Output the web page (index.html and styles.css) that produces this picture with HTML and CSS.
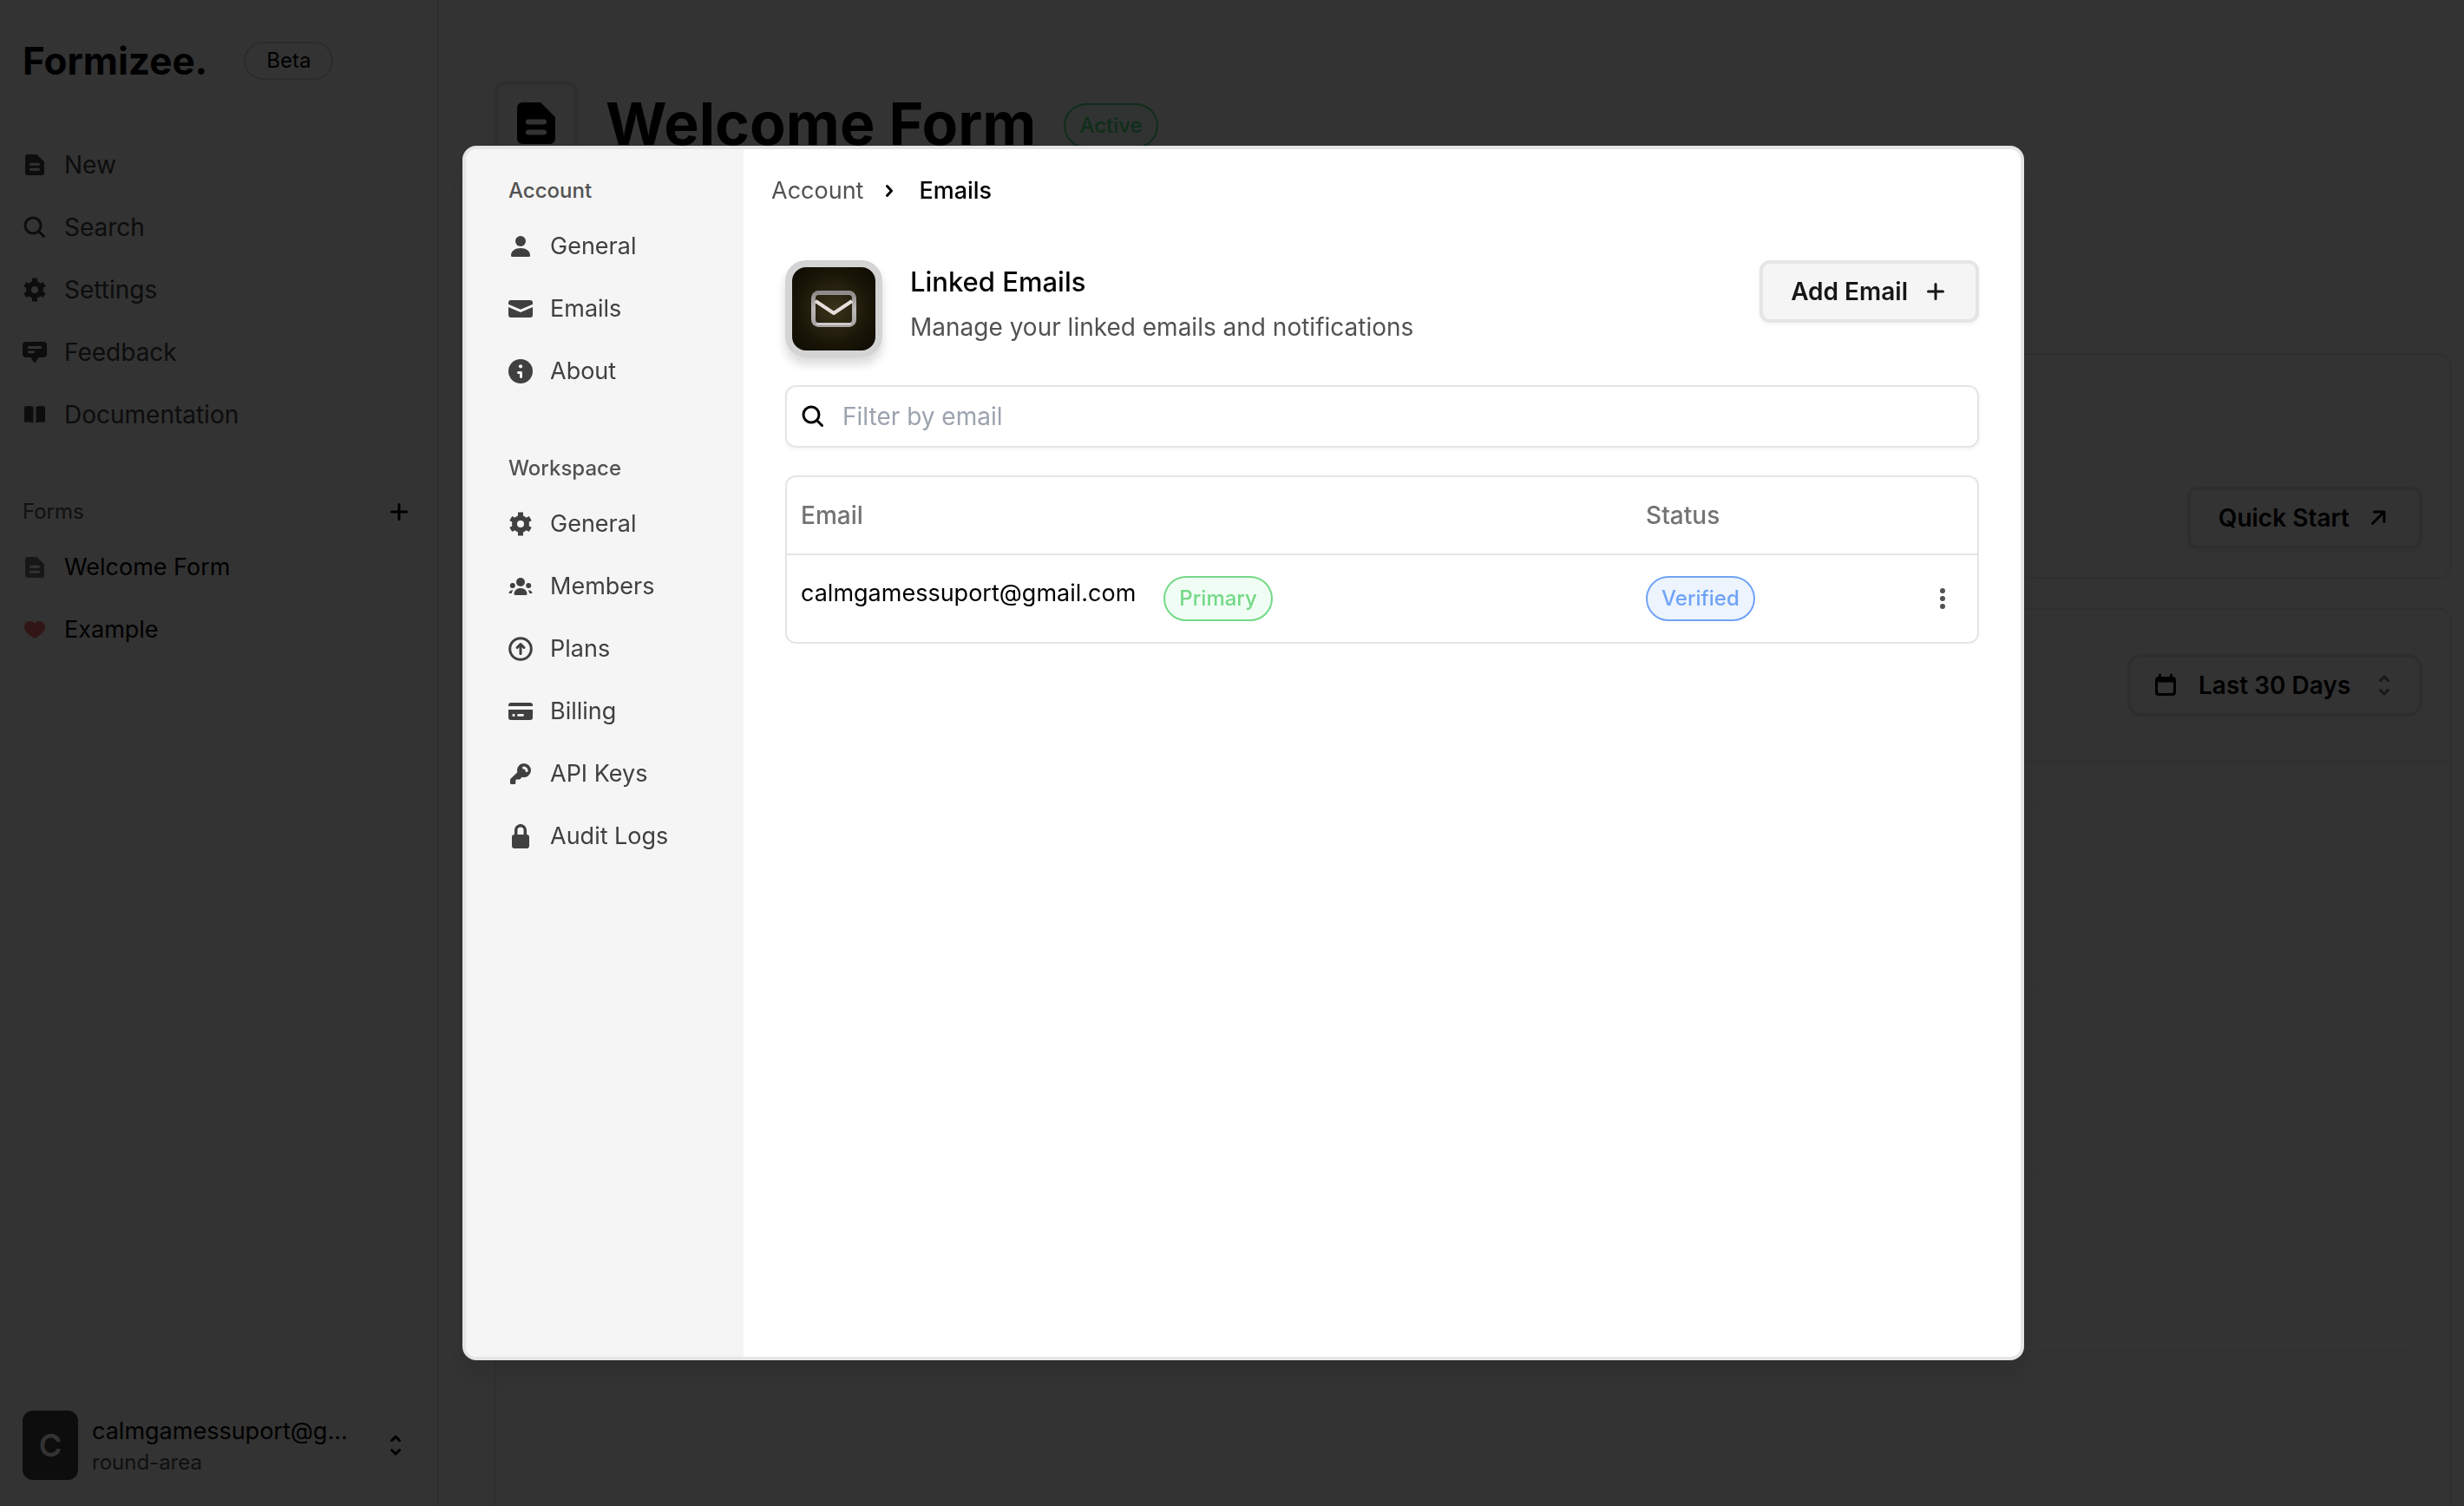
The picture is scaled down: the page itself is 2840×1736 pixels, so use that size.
FILE: index.html
```html
<!DOCTYPE html>
<html lang="en">
<head>
    <meta charset="UTF-8">
    <meta name="viewport" content="width=device-width, initial-scale=1.0">
    <title>Formizee</title>
    <link rel="stylesheet" href="styles.css">
</head>
<body>
    <svg class="sprite" aria-hidden="true">
        <symbol id="doc" viewBox="0 0 28 28">
            <path fill="currentColor" fill-rule="evenodd" d="M6 2h10.500l8.500 8.500V23a3 3 0 0 1-3 3H6a3 3 0 0 1-3-3V5a3 3 0 0 1 3-3zM9.500 11.800h9a1.500 1.500 0 0 1 0 3h-9a1.500 1.500 0 0 1 0-3zM9.500 17.800h9a1.500 1.500 0 0 1 0 3h-9a1.500 1.500 0 0 1 0-3z"/>
        </symbol>
        <symbol id="search" viewBox="0 0 28 28">
            <path class="line" d="M12 3a9 9 0 1 0 0 18a9 9 0 1 0 0-18zM18.500 18.500l6 6"/>
        </symbol>
        <symbol id="gear" viewBox="0 0 28 28">
            <circle cx="14" cy="14" r="7" fill="none" stroke="currentColor" stroke-width="6"/>
            <path fill="none" stroke="currentColor" stroke-width="6" d="M14 6V0.500M14 22v5.500M20.900 10l4.300-2.500M7.100 18l-4.300 2.500M20.900 18l4.300 2.500M7.100 10l-4.300-2.500"/>
        </symbol>
        <symbol id="chat" viewBox="0 0 28 28">
            <path fill="currentColor" fill-rule="evenodd" d="M4 2h20a4 4 0 0 1 4 4v10a4 4 0 0 1-4 4h-5.500l-3.500 5.500a1.200 1.200 0 0 1-2 0L9.500 20H4a4 4 0 0 1-4-4V6a4 4 0 0 1 4-4zM7.500 7h13a1.500 1.500 0 0 1 0 3h-13a1.500 1.500 0 0 1 0-3zM7.500 12.200h5a1.500 1.500 0 0 1 0 3h-5a1.500 1.500 0 0 1 0-3z"/>
        </symbol>
        <symbol id="book" viewBox="0 0 28 28">
            <path fill="currentColor" d="M2 6q0-1.500 1.500-1.700 5-.8 9 .7v18.700q-4-1.600-9-.9Q2 23 2 21.500zM26 6q0-1.500-1.500-1.700-5-.8-9 .7v18.700q4-1.600 9-.9 1.500.2 1.500-1.300z"/>
        </symbol>
        <symbol id="heart" viewBox="0 0 28 28">
            <path fill="currentColor" d="M14 24C8 20.500 2 16.500 2 10.500 2 6.500 5 4 8 4c2.600 0 4.500.8 6 2.600C15.500 4.800 17.400 4 20 4c3 0 6 2.500 6 6.500 0 6-6 10-12 13.500z"/>
        </symbol>
        <symbol id="user" viewBox="0 0 28 28">
            <circle cx="14" cy="8" r="6" fill="currentColor"/>
            <path fill="currentColor" d="M3 24.500C3 19 8 16 14 16s11 3 11 8.500q0 1.500-1.500 1.500h-19Q3 26 3 24.500z"/>
        </symbol>
        <symbol id="mail" viewBox="0 0 28 28">
            <path fill="currentColor" d="M0 7a3 3 0 0 1 3-3h22a3 3 0 0 1 3 3v1.700l-14 6-14-6zM0 12l14 6 14-6v9a3 3 0 0 1-3 3H3a3 3 0 0 1-3-3z"/>
        </symbol>
        <symbol id="info" viewBox="0 0 28 28">
            <circle cx="14" cy="14" r="14" fill="currentColor"/>
            <circle class="cut-fill" cx="14" cy="8.3" r="2.1"/>
            <path class="cut-line" d="M11.500 15.500h3v5"/>
        </symbol>
        <symbol id="users" viewBox="0 0 28 28">
            <g fill="currentColor">
                <circle cx="14" cy="9" r="5"/>
                <circle cx="4.800" cy="13" r="3"/>
                <circle cx="23.200" cy="13" r="3"/>
                <path d="M6.500 22.500c.5-4.500 3.500-6.500 7.500-6.500s7 2 7.500 6.500q0 1.500-1.500 1.500H8q-1.500 0-1.500-1.500zM5.500 18.200C3 18 1 19.500.5 21.200q0 .8.800.8h2.400q.3-2.200 1.800-3.800zM22.500 18.200c2.500-.2 4.500 1.300 5 3q0 .8-.8.8h-2.400q-.3-2.200-1.800-3.800z"/>
            </g>
        </symbol>
        <symbol id="upgrade" viewBox="0 0 28 28">
            <circle class="line" cx="14" cy="14" r="12.300"/>
            <path class="line" d="M14 19.500V9M10 12.500l4-4 4 4"/>
        </symbol>
        <symbol id="card" viewBox="0 0 28 28">
            <path fill="currentColor" fill-rule="evenodd" d="M0 8V7a3 3 0 0 1 3-3h22a3 3 0 0 1 3 3v1zM0 12h28v9a3 3 0 0 1-3 3H3a3 3 0 0 1-3-3zM6 16.800a1.600 1.600 0 1 0 0 3.200a1.600 1.600 0 1 0 0-3.200zM11.500 17h5a1.400 1.400 0 0 1 0 2.800h-5a1.400 1.400 0 0 1 0-2.800z"/>
        </symbol>
        <symbol id="key" viewBox="0 0 28 28">
            <path fill="currentColor" d="M18 2a8 8 0 1 1-2.200 15.700L13.500 20q-.6.600-1.500.6H9.500q-1.200 0-1.200 1.200v2.700q0 1.500-1.500 1.500H3.500Q2 26 2 24.500v-3.200q0-1 .7-1.700l7.600-7.400A8 8 0 0 1 18 2z"/>
            <path class="cut-line" d="M17.500 7a3.600 3.600 0 0 1 3.600 3.600"/>
        </symbol>
        <symbol id="lock" viewBox="0 0 28 28">
            <rect x="4" y="12" width="20" height="16" rx="3" fill="currentColor"/>
            <path fill="none" stroke="currentColor" stroke-width="3.500" d="M8.700 13V7a5.300 5.300 0 0 1 10.600 0v6"/>
        </symbol>
        <symbol id="plus" viewBox="0 0 28 28">
            <path class="line" d="M14 5.500v17M5.500 14h17"/>
        </symbol>
        <symbol id="updown" viewBox="0 0 28 28">
            <path class="line" d="M9.500 8.500L14 4l4.500 4.500M9.500 19.500L14 24l4.500-4.500"/>
        </symbol>
        <symbol id="chevron" viewBox="0 0 28 28">
            <path class="line" d="M11.500 8.500l5 5.500-5 5.500"/>
        </symbol>
        <symbol id="arrow" viewBox="0 0 28 28">
            <path class="line" d="M6.500 20.500L19.500 7.500M8.500 7h11.500V18.500"/>
        </symbol>
        <symbol id="calendar" viewBox="0 0 28 28">
            <path fill="currentColor" fill-rule="evenodd" d="M6 4h16a4 4 0 0 1 4 4v14a4 4 0 0 1-4 4H6a4 4 0 0 1-4-4V8a4 4 0 0 1 4-4zM5 10.500V21a2 2 0 0 0 2 2h14a2 2 0 0 0 2-2V10.500z"/>
            <path class="line" d="M7.500 2v4M20.500 2v4"/>
        </symbol>
        <symbol id="dots" viewBox="0 0 28 28">
            <g fill="currentColor">
                <circle cx="14" cy="5" r="3"/>
                <circle cx="14" cy="14" r="3"/>
                <circle cx="14" cy="23" r="3"/>
            </g>
        </symbol>
    </svg>

    <div class="app">
        <aside class="sidebar">
            <div class="brand">
                <span class="logo">Formizee.</span>
                <span class="beta">Beta</span>
            </div>
            <nav class="menu">
                <a href="#"><svg class="icon"><use href="#doc"/></svg>New</a>
                <a href="#"><svg class="icon"><use href="#search"/></svg>Search</a>
                <a href="#"><svg class="icon"><use href="#gear"/></svg>Settings</a>
                <a href="#"><svg class="icon"><use href="#chat"/></svg>Feedback</a>
                <a href="#"><svg class="icon"><use href="#book"/></svg>Documentation</a>
            </nav>
            <div class="menu-label forms-label">
                <span>Forms</span>
                <button type="button" aria-label="New form"><svg class="icon"><use href="#plus"/></svg></button>
            </div>
            <nav class="menu forms">
                <a href="#"><svg class="icon"><use href="#doc"/></svg>Welcome Form</a>
                <a href="#"><svg class="icon heart"><use href="#heart"/></svg>Example</a>
            </nav>
            <button class="account" type="button">
                <span class="avatar">C</span>
                <span class="account-text">
                    <span class="account-email">calmgamessuport@g...</span>
                    <span class="account-team">round-area</span>
                </span>
                <svg class="icon"><use href="#updown"/></svg>
            </button>
        </aside>

        <main class="page">
            <header class="page-header">
                <span class="form-icon"><svg><use href="#doc"/></svg></span>
                <h1>Welcome Form</h1>
                <span class="badge green">Active</span>
            </header>
            <section class="panel start">
                <button class="btn outline" type="button">Quick Start<svg class="icon"><use href="#arrow"/></svg></button>
            </section>
            <section class="panel chart">
                <div class="chart-top">
                    <label class="range">
                        <svg class="icon"><use href="#calendar"/></svg>
                        <select aria-label="Date range">
                            <option>Last 30 Days</option>
                        </select>
                        <svg class="icon muted"><use href="#updown"/></svg>
                    </label>
                </div>
                <div class="chart-grid">
                    <div></div>
                    <div></div>
                    <div></div>
                    <div></div>
                </div>
            </section>
        </main>
    </div>

    <div class="overlay">
        <div class="dialog" role="dialog" aria-modal="true" aria-label="Settings">
            <aside class="dialog-menu">
                <div class="menu-label">Account</div>
                <nav class="menu">
                    <a href="#"><svg class="icon"><use href="#user"/></svg>General</a>
                    <a href="#"><svg class="icon"><use href="#mail"/></svg>Emails</a>
                    <a href="#"><svg class="icon"><use href="#info"/></svg>About</a>
                </nav>
                <div class="menu-label">Workspace</div>
                <nav class="menu">
                    <a href="#"><svg class="icon"><use href="#gear"/></svg>General</a>
                    <a href="#"><svg class="icon"><use href="#users"/></svg>Members</a>
                    <a href="#"><svg class="icon"><use href="#upgrade"/></svg>Plans</a>
                    <a href="#"><svg class="icon"><use href="#card"/></svg>Billing</a>
                    <a href="#"><svg class="icon"><use href="#key"/></svg>API Keys</a>
                    <a href="#"><svg class="icon"><use href="#lock"/></svg>Audit Logs</a>
                </nav>
            </aside>
            <div class="dialog-body">
                <nav class="breadcrumb">
                    <a href="#">Account</a>
                    <svg class="icon"><use href="#chevron"/></svg>
                    <span>Emails</span>
                </nav>
                <div class="content">
                    <div class="title-row">
                        <span class="tile">
                            <svg viewBox="0 0 52 42">
                                <defs>
                                    <linearGradient id="metal" x1="0" y1="0" x2="0" y2="1">
                                        <stop offset="0" stop-color="#8f8a8a"/>
                                        <stop offset="0.5" stop-color="#bdb8b8"/>
                                        <stop offset="1" stop-color="#a9a3a3"/>
                                    </linearGradient>
                                </defs>
                                <rect x="2.500" y="2.500" width="47" height="37" rx="6" fill="none" stroke="url(#metal)" stroke-width="5"/>
                                <path d="M6 38.500h40" stroke="#dcd8d8" stroke-width="2"/>
                                <path d="M5 12l21 14 21-14" fill="none" stroke="#e6e0dc" stroke-width="4" stroke-linejoin="round"/>
                            </svg>
                        </span>
                        <div class="title-text">
                            <h2>Linked Emails</h2>
                            <p>Manage your linked emails and notifications</p>
                        </div>
                        <button class="btn" type="button">Add Email<svg class="icon"><use href="#plus"/></svg></button>
                    </div>
                    <label class="filter">
                        <svg class="icon"><use href="#search"/></svg>
                        <input type="text" placeholder="Filter by email" aria-label="Filter by email">
                    </label>
                    <div class="table-wrap">
                        <table>
                            <thead>
                                <tr>
                                    <th class="col-email">Email</th>
                                    <th>Status</th>
                                    <th class="col-menu"></th>
                                </tr>
                            </thead>
                            <tbody>
                                <tr>
                                    <td>
                                        <div class="email-cell">
                                            <span>calmgamessuport@gmail.com</span>
                                            <span class="badge green">Primary</span>
                                        </div>
                                    </td>
                                    <td><span class="badge blue">Verified</span></td>
                                    <td class="col-menu">
                                        <button type="button" aria-label="Email options"><svg class="icon"><use href="#dots"/></svg></button>
                                    </td>
                                </tr>
                            </tbody>
                        </table>
                    </div>
                </div>
            </div>
        </div>
    </div>
</body>
</html>
```
FILE: styles.css
```css
* {
    margin: 0;
    padding: 0;
    box-sizing: border-box;
}
body {
    height: 100vh;
    overflow: hidden;
    font-family: Inter, sans-serif;
    font-size: 28px;
    line-height: 40px;
    color: #000;
    background: #fcfcfc;
}
a {
    color: inherit;
    text-decoration: none;
}
button, input, select {
    font: inherit;
    color: inherit;
    border: none;
    background: none;
}
.sprite {
    position: absolute;
    width: 0;
    height: 0;
}
.icon {
    display: block;
    width: 28px;
    height: 28px;
    flex-shrink: 0;
}
.line {
    fill: none;
    stroke: currentColor;
    stroke-width: 3;
    stroke-linecap: round;
    stroke-linejoin: round;
}
.cut-fill {
    fill: #f5f5f5;
}
.cut-line {
    fill: none;
    stroke: #f5f5f5;
    stroke-width: 3;
    stroke-linecap: round;
    stroke-linejoin: round;
}

/* sidebar */
.app {
    display: flex;
    height: 100%;
}
.sidebar {
    display: flex;
    flex-direction: column;
    width: 506px;
    flex-shrink: 0;
    padding: 40px 26px 30px;
    border-right: 2px solid #e5e5e5;
}
.brand {
    display: flex;
    align-items: center;
    gap: 42px;
    height: 60px;
    margin-bottom: 54px;
}
.logo {
    font-size: 44px;
    font-weight: 700;
}
.beta {
    padding: 0 24px;
    border: 2px solid #d4d4d4;
    border-radius: 22px;
    font-size: 24px;
}
.menu a {
    display: flex;
    align-items: center;
    gap: 20px;
    height: 72px;
    color: #404040;
}
.menu-label {
    display: flex;
    align-items: center;
    height: 56px;
    font-size: 24px;
    font-weight: 500;
    color: #525252;
}
.menu + .menu-label {
    margin-top: 48px;
}
.forms-label {
    justify-content: space-between;
    font-weight: 400;
    padding-right: 4px;
}
.forms-label button {
    color: #000;
}
.forms a, .dialog-menu a, .breadcrumb, .account-email, .email-cell {
    font-size: 27px;
}
.forms a {
    color: #000;
}
.forms .icon {
    color: #737373;
}
.forms .heart {
    color: #f87171;
}
.account {
    display: flex;
    align-items: center;
    gap: 16px;
    margin-top: auto;
    padding-right: 8px;
    text-align: left;
}
.avatar {
    width: 64px;
    height: 80px;
    border-radius: 12px;
    background: #404040;
    color: #fff;
    font-size: 36px;
    line-height: 80px;
    font-weight: 600;
    text-align: center;
}
.account-text {
    flex: 1;
    display: flex;
    flex-direction: column;
}
.account-team {
    font-size: 24px;
    line-height: 32px;
    color: #525252;
}

/* page behind the dialog */
.page {
    flex: 1;
    padding: 94px 14px 0 64px;
    overflow: hidden;
}
.page-header {
    display: flex;
    align-items: center;
    gap: 32px;
    height: 96px;
    margin-bottom: 217px;
}
.form-icon {
    display: flex;
    align-items: center;
    justify-content: center;
    width: 96px;
    height: 96px;
    border: 4px solid #e5e5e5;
    border-radius: 12px;
}
.form-icon svg {
    width: 56px;
    height: 56px;
}
h1 {
    font-size: 68px;
    line-height: 96px;
}
.panel {
    border: 2px solid #ececec;
    border-radius: 16px;
    background: #fff;
}
.start {
    display: flex;
    justify-content: flex-end;
    align-items: flex-end;
    height: 260px;
    padding: 32px;
    margin-bottom: 34px;
}
.chart {
    height: 1200px;
}
.chart-top {
    display: flex;
    justify-content: flex-end;
    align-items: flex-start;
    height: 176px;
    padding: 51px 32px;
    border-bottom: 2px solid #ececec;
}
.range {
    display: flex;
    align-items: center;
    gap: 24px;
    height: 72px;
    padding: 0 26px;
    border: 4px solid #e5e5e5;
    border-radius: 16px;
    font-weight: 600;
}
.range select {
    appearance: none;
}
.muted {
    color: #737373;
}
.chart-grid {
    height: 100%;
    padding: 48px 40px 0;
    background: #fcfcfc;
}
.chart-grid div {
    height: 210px;
    border-top: 2px solid #f2f2f2;
}

/* buttons and badges */
.btn {
    display: flex;
    align-items: center;
    gap: 18px;
    height: 72px;
    padding: 0 32px;
    border: 4px solid #e5e5e5;
    border-radius: 12px;
    background: #f5f5f5;
    color: #171717;
    font-weight: 600;
    box-shadow: 0 2px 4px rgba(0, 0, 0, 0.05);
}
.outline {
    gap: 20px;
    background: #fff;
    color: #000;
}
.badge {
    display: inline-block;
    height: 52px;
    padding: 0 16px;
    border: 2px solid;
    border-radius: 26px;
    font-size: 24px;
    line-height: 48px;
    font-weight: 500;
}
.green {
    color: #74d987;
    background: #f0fdf4;
}
.page-header .green {
    margin-top: 6px;
    color: #4ade80;
}
.blue {
    color: #70a3f7;
    background: #edf4fe;
}

/* dialog */
.overlay {
    position: fixed;
    inset: 0;
    display: flex;
    align-items: center;
    justify-content: center;
    padding-left: 26px;
    background: rgba(0, 0, 0, 0.8);
}
.dialog {
    display: flex;
    width: 100%;
    max-width: 1800px;
    height: 100%;
    max-height: 1400px;
    overflow: hidden;
    border: 4px solid #e5e5e5;
    border-radius: 16px;
    background: #fff;
    box-shadow: 0 20px 30px rgba(0, 0, 0, 0.1);
}
.dialog-menu {
    width: 320px;
    flex-shrink: 0;
    padding: 20px 24px 20px 49px;
    background: #f5f5f5;
}
.dialog-body {
    flex: 1;
}
.breadcrumb {
    display: flex;
    align-items: center;
    height: 96px;
    padding: 0 32px;
    gap: 16px;
}
.breadcrumb a {
    color: #525252;
}
.breadcrumb span {
    font-weight: 500;
    margin-left: 4px;
}
.content {
    display: flex;
    flex-direction: column;
    gap: 32px;
    padding: 32px 48px;
}
.title-row {
    display: flex;
    align-items: flex-start;
    gap: 32px;
}
.tile {
    display: flex;
    align-items: center;
    justify-content: center;
    width: 112px;
    height: 112px;
    border: 8px solid #d4d4d4;
    border-radius: 24px;
    background: radial-gradient(circle, #3a331c, #1a1607 60%, #0c0a02);
    box-shadow: 0 8px 12px rgba(0, 0, 0, 0.15);
}
.tile svg {
    width: 52px;
    height: 42px;
}
.title-text {
    display: flex;
    flex: 1;
    flex-direction: column;
    gap: 12px;
    padding-top: 5px;
}
h2 {
    font-size: 31px;
    line-height: 40px;
    font-weight: 500;
}
.title-text p {
    color: #525252;
}
.filter {
    display: flex;
    align-items: center;
    gap: 20px;
    height: 72px;
    padding: 0 16px;
    border: 2px solid #e5e5e5;
    border-radius: 12px;
    box-shadow: 0 2px 4px rgba(0, 0, 0, 0.05);
}
.filter input {
    flex: 1;
    outline: none;
}
.filter input::placeholder {
    color: #9ca3af;
}
.table-wrap {
    border: 2px solid #e5e5e5;
    border-radius: 12px;
}
table {
    width: 100%;
    border-collapse: separate;
    border-spacing: 0;
    table-layout: fixed;
}
th, td {
    padding: 0 16px;
    text-align: left;
    vertical-align: middle;
}
th {
    height: 90px;
    font-weight: 500;
    color: #737373;
    border-bottom: 2px solid #e5e5e5;
}
td {
    height: 100px;
}
.col-email {
    width: 71%;
}
.col-menu {
    width: 80px;
    padding: 0;
}
.col-menu button {
    display: block;
    margin: 0 auto;
    color: #525252;
}
.email-cell {
    display: flex;
    align-items: flex-start;
    gap: 32px;
}
td .badge {
    vertical-align: middle;
}
```
